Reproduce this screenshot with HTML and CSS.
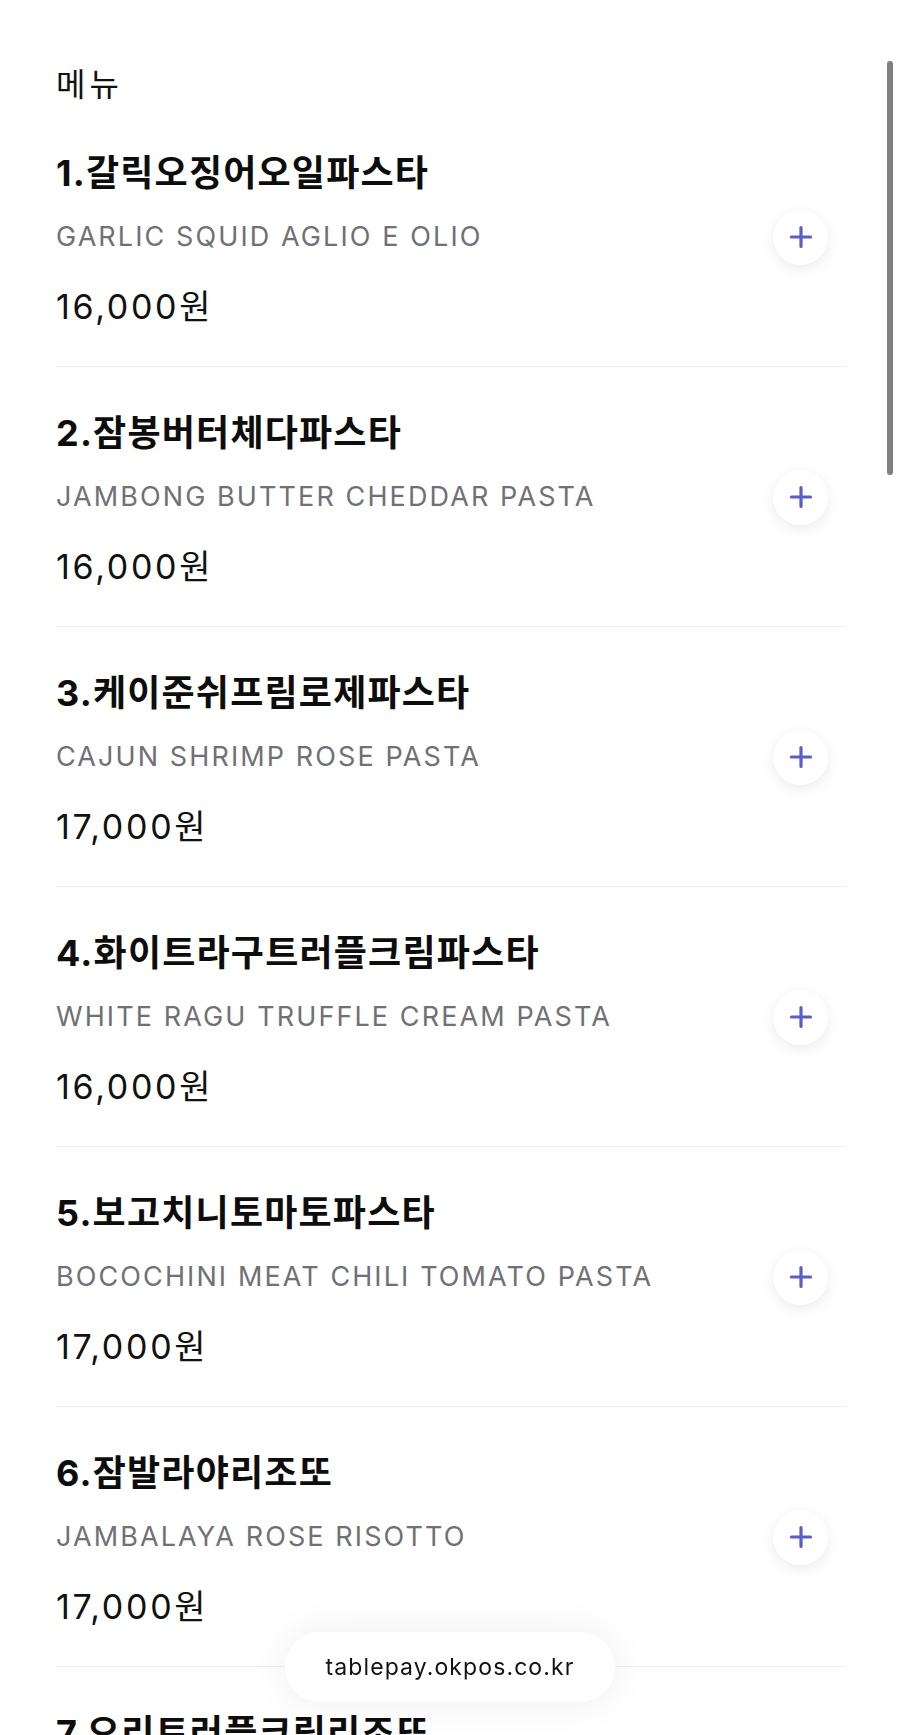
FILE: index.html
```html
<!DOCTYPE html>
<html lang="ko">
<head>
<meta charset="utf-8">
<title>메뉴</title>
<link rel="stylesheet" href="styles.css">
</head>
<body>
<main class="page">
  <h2 class="section-title">메뉴</h2>
  <ul class="menu-list">
    <li class="menu-item">
      <div class="info">
        <div class="name">1.갈릭오징어오일파스타</div>
        <div class="eng">GARLIC SQUID AGLIO E OLIO</div>
        <div class="price">16,000원</div>
      </div>
      <button class="add" aria-label="추가"><svg viewBox="0 0 24 24" width="24" height="24"><path d="M12 2.5v19M2.5 12h19" stroke="currentColor" stroke-width="3.2" stroke-linecap="round" fill="none"/></svg></button>
    </li>
    <li class="menu-item">
      <div class="info">
        <div class="name">2.잠봉버터체다파스타</div>
        <div class="eng">JAMBONG BUTTER CHEDDAR PASTA</div>
        <div class="price">16,000원</div>
      </div>
      <button class="add" aria-label="추가"><svg viewBox="0 0 24 24" width="24" height="24"><path d="M12 2.5v19M2.5 12h19" stroke="currentColor" stroke-width="3.2" stroke-linecap="round" fill="none"/></svg></button>
    </li>
    <li class="menu-item">
      <div class="info">
        <div class="name">3.케이준쉬프림로제파스타</div>
        <div class="eng">CAJUN SHRIMP ROSE PASTA</div>
        <div class="price">17,000원</div>
      </div>
      <button class="add" aria-label="추가"><svg viewBox="0 0 24 24" width="24" height="24"><path d="M12 2.5v19M2.5 12h19" stroke="currentColor" stroke-width="3.2" stroke-linecap="round" fill="none"/></svg></button>
    </li>
    <li class="menu-item">
      <div class="info">
        <div class="name">4.화이트라구트러플크림파스타</div>
        <div class="eng">WHITE RAGU TRUFFLE CREAM PASTA</div>
        <div class="price">16,000원</div>
      </div>
      <button class="add" aria-label="추가"><svg viewBox="0 0 24 24" width="24" height="24"><path d="M12 2.5v19M2.5 12h19" stroke="currentColor" stroke-width="3.2" stroke-linecap="round" fill="none"/></svg></button>
    </li>
    <li class="menu-item">
      <div class="info">
        <div class="name">5.보고치니토마토파스타</div>
        <div class="eng">BOCOCHINI MEAT CHILI TOMATO PASTA</div>
        <div class="price">17,000원</div>
      </div>
      <button class="add" aria-label="추가"><svg viewBox="0 0 24 24" width="24" height="24"><path d="M12 2.5v19M2.5 12h19" stroke="currentColor" stroke-width="3.2" stroke-linecap="round" fill="none"/></svg></button>
    </li>
    <li class="menu-item">
      <div class="info">
        <div class="name">6.잠발라야리조또</div>
        <div class="eng">JAMBALAYA ROSE RISOTTO</div>
        <div class="price">17,000원</div>
      </div>
      <button class="add" aria-label="추가"><svg viewBox="0 0 24 24" width="24" height="24"><path d="M12 2.5v19M2.5 12h19" stroke="currentColor" stroke-width="3.2" stroke-linecap="round" fill="none"/></svg></button>
    </li>
    <li class="menu-item">
      <div class="info">
        <div class="name">7.오리트러플크림리조또</div>
        <div class="eng">DUCK TRUFFLE CREAM RISOTTO</div>
        <div class="price">17,000원</div>
      </div>
      <button class="add" aria-label="추가"><svg viewBox="0 0 24 24" width="24" height="24"><path d="M12 2.5v19M2.5 12h19" stroke="currentColor" stroke-width="3.2" stroke-linecap="round" fill="none"/></svg></button>
    </li>
  </ul>
</main>
<div class="url-pill">tablepay.okpos.co.kr</div>
<div class="scroll-indicator"></div>
</body>
</html>
```
FILE: styles.css
```css
html, body {
  margin: 0;
  padding: 0;
  background: #ffffff;
  overflow: hidden;
  height: 1735px;
}
body {
  font-family: "Inter", "Noto Sans CJK KR", sans-serif;
  color: #111111;
}
.page {
  padding: 62px 54px 0 56px;
}
.section-title {
  margin: 0 0 5px 0;
  font-family: "Noto Sans CJK KR", sans-serif;
  font-weight: 400;
  font-size: 32px;
  line-height: 40px;
  letter-spacing: 4px;
}
.menu-list {
  list-style: none;
  margin: 0;
  padding: 0;
}
.menu-item {
  display: flex;
  align-items: center;
  justify-content: space-between;
  padding: 46px 0 39px 0;
  border-bottom: 1px solid #efefef;
}
.info {
  display: flex;
  flex-direction: column;
}
.name {
  font-family: "Inter", "Noto Sans CJK KR", sans-serif;
  font-weight: 700;
  font-size: 36px;
  line-height: 40px;
  letter-spacing: 1.2px;
  color: #0d0d0d;
}
.eng {
  margin-top: 26px;
  font-size: 27px;
  line-height: 36px;
  color: #707075;
  letter-spacing: 2.1px;
}
.price {
  margin-top: 32px;
  font-size: 34px;
  line-height: 40px;
  color: #111111;
  letter-spacing: 2.7px;
}
.add {
  width: 55px;
  height: 55px;
  margin: 0 18px 6px 0;
  padding: 0;
  border: none;
  border-radius: 50%;
  background: #ffffff;
  color: #5b5ec8;
  box-shadow: 0 4px 14px rgba(0, 0, 0, 0.08);
  display: flex;
  align-items: center;
  justify-content: center;
}
.add svg {
  width: 24px;
  height: 24px;
}
.url-pill {
  position: fixed;
  left: 285px;
  top: 1632px;
  width: 330px;
  height: 70px;
  border-radius: 35px;
  background: #ffffff;
  box-shadow: 0 0 40px rgba(0, 0, 0, 0.07);
  display: flex;
  align-items: center;
  justify-content: center;
  font-family: "Inter", sans-serif;
  font-size: 23px;
  color: #111111;
  letter-spacing: 1.1px;
}
.scroll-indicator {
  position: fixed;
  left: 887px;
  top: 61px;
  width: 6px;
  height: 414px;
  border-radius: 3px;
  background: #808080;
}
```
